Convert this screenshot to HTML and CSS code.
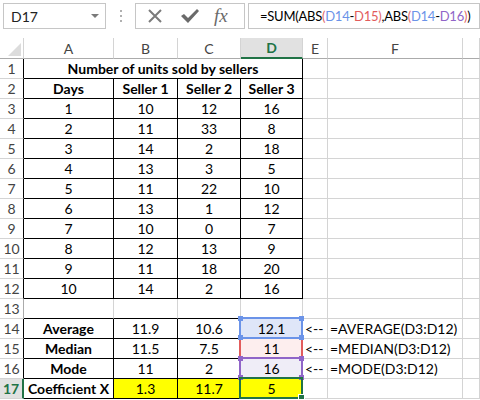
FILE: index.html
```html
<!DOCTYPE html>
<html lang="en">
<head>
    <meta charset="UTF-8">
    <title>Coefficient X</title>
    <link rel="stylesheet" href="styles.css">
</head>
<body>
    <div class="toolbar">
        <div class="name-box">
            <span class="name">D17</span>
            <span class="caret"></span>
        </div>
        <div class="grip"><i></i><i></i><i></i></div>
        <div class="fx-box">
            <svg class="icon-x" width="16" height="16" viewBox="0 0 16 16">
                <path d="M2 2 L14 14 M14 2 L2 14" stroke="#7b7b7b" stroke-width="2" fill="none"/>
            </svg>
            <svg class="icon-check" width="20" height="16" viewBox="0 0 20 16">
                <path d="M1 8 L4 6 L8 10 L17 1 L19 3 L8 15 Z" fill="#6a6a6a"/>
            </svg>
            <span class="fx">fx</span>
        </div>
        <div class="formula">=SUM(ABS<span class="paren">(</span><span class="blue">D14</span>-<span class="red">D15</span><span class="paren">)</span>,ABS<span class="paren">(</span><span class="blue">D14</span>-<span class="purple">D16</span><span class="paren">)</span>)</div>
    </div>

    <table class="sheet">
        <colgroup>
            <col style="width:24px">
            <col style="width:90px">
            <col style="width:64px">
            <col style="width:63px">
            <col style="width:62px">
            <col style="width:25px">
            <col style="width:135px">
            <col style="width:17px">
        </colgroup>
        <thead>
            <tr>
                <th class="corner"><span class="tri"></span></th>
                <th>A</th>
                <th>B</th>
                <th>C</th>
                <th class="sel-col">D</th>
                <th>E</th>
                <th>F</th>
                <th></th>
            </tr>
        </thead>
        <tbody>
            <tr>
                <td class="rn edge">1</td>
                <td class="title" colspan="4">Number of units sold by sellers</td>
                <td></td><td></td><td></td>
            </tr>
            <tr>
                <td class="rn edge">2</td>
                <td class="bx bold">Days</td>
                <td class="bx bold">Seller 1</td>
                <td class="bx bold">Seller 2</td>
                <td class="bx bold">Seller 3</td>
                <td></td><td></td><td></td>
            </tr>
            <tr><td class="rn edge">3</td><td class="bx">1</td><td class="bx">10</td><td class="bx">12</td><td class="bx">16</td><td></td><td></td><td></td></tr>
            <tr><td class="rn edge">4</td><td class="bx">2</td><td class="bx">11</td><td class="bx">33</td><td class="bx">8</td><td></td><td></td><td></td></tr>
            <tr><td class="rn edge">5</td><td class="bx">3</td><td class="bx">14</td><td class="bx">2</td><td class="bx">18</td><td></td><td></td><td></td></tr>
            <tr><td class="rn edge">6</td><td class="bx">4</td><td class="bx">13</td><td class="bx">3</td><td class="bx">5</td><td></td><td></td><td></td></tr>
            <tr><td class="rn edge">7</td><td class="bx">5</td><td class="bx">11</td><td class="bx">22</td><td class="bx">10</td><td></td><td></td><td></td></tr>
            <tr><td class="rn edge">8</td><td class="bx">6</td><td class="bx">13</td><td class="bx">1</td><td class="bx">12</td><td></td><td></td><td></td></tr>
            <tr><td class="rn edge">9</td><td class="bx">7</td><td class="bx">10</td><td class="bx">0</td><td class="bx">7</td><td></td><td></td><td></td></tr>
            <tr><td class="rn edge">10</td><td class="bx">8</td><td class="bx">12</td><td class="bx">13</td><td class="bx">9</td><td></td><td></td><td></td></tr>
            <tr><td class="rn edge">11</td><td class="bx">9</td><td class="bx">11</td><td class="bx">18</td><td class="bx">20</td><td></td><td></td><td></td></tr>
            <tr><td class="rn edge">12</td><td class="bx">10</td><td class="bx">14</td><td class="bx">2</td><td class="bx">16</td><td></td><td></td><td></td></tr>
            <tr>
                <td class="rn">13</td>
                <td class="top-edge"></td><td class="top-edge"></td><td class="top-edge"></td><td class="top-edge"></td>
                <td></td><td></td><td></td>
            </tr>
            <tr>
                <td class="rn edge">14</td>
                <td class="bx bold">Average</td>
                <td class="bx">11.9</td>
                <td class="bx">10.6</td>
                <td class="bx fill-blue">12.1<span class="ref ref-blue"><b class="h tl"></b><b class="h tr"></b><b class="h bl"></b><b class="h br"></b></span></td>
                <td class="note">&lt;--</td>
                <td class="note">=AVERAGE(D3:D12)</td>
                <td></td>
            </tr>
            <tr>
                <td class="rn edge">15</td>
                <td class="bx bold">Median</td>
                <td class="bx">11.5</td>
                <td class="bx">7.5</td>
                <td class="bx fill-red">11<span class="ref ref-red"></span></td>
                <td class="note">&lt;--</td>
                <td class="note">=MEDIAN(D3:D12)</td>
                <td></td>
            </tr>
            <tr>
                <td class="rn edge">16</td>
                <td class="bx bold">Mode</td>
                <td class="bx">11</td>
                <td class="bx">2</td>
                <td class="bx fill-purple">16<span class="ref ref-purple"><b class="h tl"></b><b class="h tr"></b><b class="h bl"></b><b class="h br"></b></span></td>
                <td class="note">&lt;--</td>
                <td class="note">=MODE(D3:D12)</td>
                <td></td>
            </tr>
            <tr>
                <td class="rn sel-row">17</td>
                <td class="bx bold">Coefficient X</td>
                <td class="bx yellow">1.3</td>
                <td class="bx yellow">11.7</td>
                <td class="bx yellow">5<span class="ref ref-green"><b class="fill-handle"></b></span></td>
                <td></td><td></td><td></td>
            </tr>
        </tbody>
    </table>
</body>
</html>
```

FILE: styles.css
```css
body {
    margin: 0;
    background: #fff;
    font-family: Lato, "Liberation Sans", sans-serif;
    font-size: 14px;
    color: #000;
    overflow: hidden;
}
.toolbar {
    display: flex;
    align-items: flex-start;
    height: 38px;
    padding-top: 3px;
    box-sizing: border-box;
}
.name-box {
    margin-left: 3px;
    width: 103px;
    height: 26px;
    box-sizing: border-box;
    border: 1px solid #c6c6c6;
    display: flex;
    align-items: center;
    justify-content: space-between;
    padding: 0 6px 0 7px;
}
.name {
    color: #222;
}
.caret {
    width: 0;
    height: 0;
    border-left: 4px solid transparent;
    border-right: 4px solid transparent;
    border-top: 4px solid #7a7a7a;
}
.grip {
    width: 29px;
    height: 26px;
    display: flex;
    flex-direction: column;
    align-items: center;
    justify-content: center;
    gap: 3px;
}
.grip i {
    display: block;
    width: 2px;
    height: 2px;
    background: #b0b0b0;
}
.fx-box {
    width: 110px;
    height: 26px;
    box-sizing: border-box;
    border: 1px solid #c6c6c6;
    display: flex;
    align-items: center;
    padding-left: 11px;
}
.icon-x {
    margin-right: 17px;
}
.icon-check {
    margin-right: 14px;
}
.fx {
    font-family: "Liberation Serif", serif;
    font-style: italic;
    font-size: 19px;
    color: #6a6a6a;
}
.formula {
    margin-left: 3px;
    width: 232px;
    height: 26px;
    box-sizing: border-box;
    border: 1px solid #c6c6c6;
    padding-left: 11px;
    font-size: 13px;
    letter-spacing: -0.25px;
    line-height: 24px;
    white-space: nowrap;
    overflow: hidden;
}
.formula .paren { color: #e26b6b; }
.formula .blue { color: #6b93e8; }
.formula .red { color: #e25c5c; }
.formula .purple { color: #9065c8; }

.sheet {
    table-layout: fixed;
    border-collapse: separate;
    border-spacing: 0;
    width: 480px;
}
.sheet th,
.sheet td {
    box-sizing: border-box;
    padding: 0;
    border-right: 1px solid #d4d4d4;
    border-bottom: 1px solid #d4d4d4;
    text-align: center;
    white-space: nowrap;
    overflow: visible;
    line-height: 19px;
}
.sheet tr {
    height: 20px;
}
.sheet th {
    font-weight: normal;
    color: #444;
    border-bottom-color: #ababab;
}
.corner {
    position: relative;
    border-right-color: #ababab;
}
.tri {
    position: absolute;
    right: 2px;
    bottom: 2px;
    width: 0;
    height: 0;
    border-left: 13px solid transparent;
    border-bottom: 13px solid #dcdcdc;
}
.sel-col {
    background: #e1e1e1;
    color: #217346 !important;
    font-weight: bold !important;
    border-bottom: 2px solid #217346 !important;
}
.rn {
    color: #444;
    border-right-color: #ababab !important;
    border-bottom-color: #d4d4d4;
}
.rn.edge {
    border-right-color: #000 !important;
}
.sel-row {
    background: #e1e1e1;
    color: #217346;
    font-weight: bold;
    border-right: 2px solid #217346 !important;
}
.title {
    font-weight: bold;
    border-right-color: #000 !important;
    border-bottom-color: #000 !important;
}
.bx {
    border-right-color: #000 !important;
    border-bottom-color: #000 !important;
}
.top-edge {
    border-bottom-color: #000 !important;
}
.bold {
    font-weight: bold;
}
.sheet .note {
    text-align: left;
    padding-left: 2px;
}
.yellow {
    background: #ffff00;
}
.fill-blue { background: #dfe6f8; position: relative; }
.fill-red { background: #fdeeee; position: relative; }
.fill-purple { background: #efedf7; position: relative; }
.yellow { position: relative; }

.ref {
    position: absolute;
    top: -2px;
    left: -2px;
    right: -1px;
    bottom: -1px;
    box-sizing: border-box;
    pointer-events: none;
}
.ref-blue { border: 2px solid #6b93e8; z-index: 1; }
.ref-red { border-left: 2px solid #e25c5c; border-right: 2px solid #e25c5c; }
.ref-purple { border: 2px solid #9065c8; z-index: 2; }
.ref-green { border: 2px solid #217346; z-index: 3; }
.h {
    position: absolute;
    width: 5px;
    height: 5px;
}
.ref-blue .h { background: #6b93e8; }
.ref-purple .h { background: #9065c8; }
.tl { top: -3px; left: -3px; }
.tr { top: -3px; right: -3px; }
.bl { bottom: -3px; left: -3px; }
.br { bottom: -3px; right: -3px; }
.fill-handle {
    position: absolute;
    right: -4px;
    bottom: -4px;
    width: 5px;
    height: 5px;
    background: #217346;
    border: 1px solid #fff;
}
```
